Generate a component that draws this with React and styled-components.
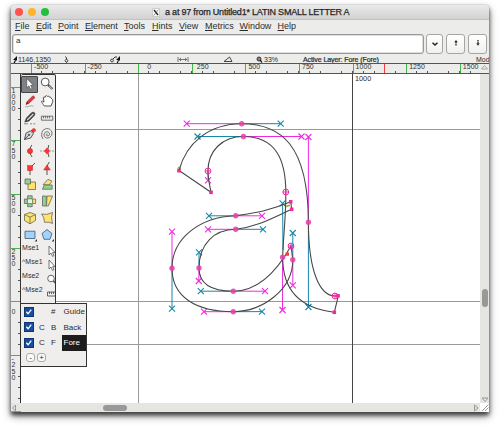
import React from "react";
import styled, { createGlobalStyle, css } from "styled-components";

const Global = createGlobalStyle`
  * { box-sizing: border-box; }
  body { margin: 0; background: #fff; overflow: hidden; font-family: "Liberation Sans", Arial, sans-serif; color: #2c2c2c; }
`;
const Page = styled.div`width: 500px; height: 428px; padding: 5px 11px 17px 11px; background: #fff;`;
const Window = styled.div`
  height: 407px; display: flex; flex-direction: column; overflow: hidden;
  background: #ececea; border-radius: 3px 3px 0 0;
  box-shadow: 0 0 1px #777, 0 3px 4px rgba(0,0,0,.65), 0 4px 9px rgba(0,0,0,.45);
`;
const TitleBar = styled.div`
  height: 15px; flex: none; display: flex; align-items: center; padding-left: 4px;
  background: linear-gradient(#eaeaea, #d2d2d2); border-bottom: 1px solid #c2c2c2;
`;
const Lights = styled.div`display: flex; gap: 5px; width: 137px;`;
const Light = styled.i`width: 8px; height: 8px; border-radius: 50%; background: ${p => p.$c};`;
const Title = styled.div`
  font-size: 9px; line-height: 14px; margin-left: 5px; white-space: nowrap; color: #262626;
  letter-spacing: -.21px; -webkit-text-stroke: .25px #262626;
`;
const MenuBar = styled.div`height: 14px; flex: none; display: flex; padding-left: 4px;`;
const MenuItem = styled.div`
  width: ${p => p.$w}px; flex: none; font-size: 9px; line-height: 13px; white-space: nowrap; letter-spacing: -.03px;
`;
const U = styled.span`text-decoration: underline; text-underline-offset: 1px; text-decoration-thickness: 1px;`;
const EntryRow = styled.div`height: 20px; flex: none; display: flex; padding: 0 2px 0 1px; gap: 3px;`;
const Entry = styled.div`
  flex: 1; background: #fff; border: 1px solid #999; border-radius: 3px; box-shadow: inset 0 0 0 .5px #bbb;
  font-size: 8px; line-height: 12px; padding-left: 3px; margin-right: -1px;
`;
const EntryButton = styled.div`
  width: ${p => p.$w}px; border: 1px solid #a5a5a3; border-radius: 3px; background: linear-gradient(#fff, #f0f0ee);
  display: flex; align-items: center; justify-content: center;
`;
const Info = styled.div`
  height: 10px; flex: none; display: grid; grid-template-columns: 51px 46px 67px 46px 33px 47px 173px 20px;
  align-items: center; border-bottom: 1px solid #555; font-size: 7px; line-height: 9px; white-space: nowrap; padding-left: 2px;
  overflow: hidden;
`;
const InfoCell = styled.div`
  display: flex; align-items: center; padding-top: 1px; letter-spacing: ${p => p.$ls || 0}px;
  ${p => p.$strong && css`-webkit-text-stroke: .2px #222;`}
`;
const HRuler = styled.div`
  height: 10px; flex: none; display: flex; padding-left: 20px; position: relative; overflow: hidden;
  border-bottom: 1px solid #555;
`;
const HCell = styled.div`
  width: 53.6px; flex: none; height: 9px; border-left: 1px solid #46b54a; padding-left: 2px;
  font-size: 7px; line-height: 6.5px; color: #333; letter-spacing: .05px;
  background: repeating-linear-gradient(90deg, transparent 0 9.2px, #555 9.2px 10px, transparent 10px 10.72px) 0 7px / 100% 2px no-repeat;
`;
const HMark = styled.i`position: absolute; left: 373px; top: 0; width: 1px; height: 9px; background: #f04040;`;
const RulerArrow = styled.svg`position: absolute; right: 0; top: 0; background: #ececea;`;
const Body = styled.div`flex: 1; display: flex; min-height: 0;`;
const VRuler = styled.div`
  width: 10px; flex: none; padding-top: 12.6px; border-right: 1px solid #333; overflow: hidden;
`;
const VCell = styled.div`
  height: 53.7px; border-top: 1px solid #46b54a; font-size: 7px; line-height: 6.3px; color: #333;
  display: flex; flex-direction: column;
  background: repeating-linear-gradient(180deg, transparent 0 9.6px, #555 9.6px 10.4px, transparent 10.4px 10.74px) 7px 0 / 2px 100% no-repeat;
`;
const VDigit = styled.span`display: block; height: 6.3px; padding-left: .5px;`;
const Canvas = styled.div`flex: 1; position: relative; background: #fff; overflow: hidden;`;
const Drawing = styled.svg`position: absolute; left: 0; top: 0; display: block;`;
const GuideLabel = styled.span`position: absolute; left: 334px; top: 0; font-size: 7.3px; line-height: 9px;`;
const VScroll = styled.div`width: 9px; flex: none; background: #e5e6e2; display: flex; flex-direction: column; align-items: center;`;
const VThumb = styled.div`width: 6px; height: 18px; border-radius: 3px; background: #989997; margin-top: 215px; margin-bottom: auto;`;
const HScroll = styled.div`height: 9px; flex: none; background: #e5e6e2; display: flex; align-items: center; position: relative;`;
const HThumb = styled.div`width: 24px; height: 6px; border-radius: 3px; background: #999; margin-left: 86px; margin-right: auto;`;
const VMark = styled.i`position: absolute; left: 0; bottom: 0; width: 10px; height: 1px; background: #f07070;`;
const Arrow = styled.svg`display: block; flex: none;`;

const ToolBox = styled.div`
  position: absolute; left: 0; top: 0; width: 35px; height: 230px; background: #efeeec;
  border: 1px solid #333; border-left: 0; border-radius: 2px 2px 0 0; padding-top: 1px;
`;
const ToolGrid = styled.div`display: grid; grid-template-columns: 17px 17px; grid-auto-rows: 16.7px;`;
const Tool = styled.div`
  display: flex; align-items: center; justify-content: center;
  ${p => p.$active && css`background: #7d8286; border: 1px solid #454545; border-radius: 1px;`}
`;
const MouseRow = styled.div`
  height: 14px; display: flex; justify-content: space-between; overflow: hidden;
  font-size: 7px; line-height: 10px; padding-left: 1px; letter-spacing: .05px;
  svg { margin-top: 2px; }
`;
const Layers = styled.div`
  position: absolute; left: 0; top: 229px; width: 66px; height: 64px; background: #efeeec;
  border: 1px solid #333; border-left: 0; padding: 0 0 0 3px;
`;
const LayerRow = styled.div`display: grid; grid-template-columns: 13px 12px 13px 24px; height: 15.5px; align-items: center; font-size: 8px;`;
const Check = styled.div`width: 10px; height: 10px; background: #174f9c; border: 1px solid #0b3676; display: flex;`;
const LayerFlag = styled.span`padding-left: 2px;`;
const LayerName = styled.div`
  height: 15.5px; line-height: 15px; padding-left: 1.5px;
  ${p => p.$active && css`background: #1d1d1d; color: #fff;`}
`;
const LayerButtons = styled.div`display: flex; gap: 2px; padding: 2px 0 0 2px;`;
const LayerButton = styled.div`
  width: 9px; height: 9px; border: 1px solid #aaa; border-radius: 3px; background: #fafafa;
  display: flex; align-items: center; justify-content: center; font-size: 8px; line-height: 7px;
`;

const M = "#ee2be2", T = "#1688a8", K = "#444", Y = "#ffe36e", G = "#86d890";

const handles = [
  [241.7, 123.7, 186.7, 123.7, M], [241.7, 123.7, 280.7, 123.7, T],
  [243.5, 136.5, 197.5, 136.5, T], [243.5, 136.5, 301.5, 136.5, M],
  [308.4, 222.3, 308.4, 137, M], [308.4, 222.3, 308.4, 307, T],
  [208, 171, 208, 180.3, M], [283, 250, 282.6, 203.3, T],
  [235.7, 215.8, 209, 215.8, T], [235.7, 215.8, 262, 215.8, M],
  [235.7, 229.3, 208, 229.3, M], [235.7, 229.3, 263, 229.3, T],
  [172, 268.3, 172, 231.7, M], [172, 268.3, 172, 308.7, T],
  [199, 268, 199, 252.3, T], [199, 268, 198.8, 281, M],
  [233.3, 291.2, 200.8, 291.2, T], [233.3, 291.2, 265, 291.2, M],
  [233.3, 311.7, 204, 311.7, M], [233.3, 311.7, 262, 311.6, T],
  [292.8, 259.7, 292.8, 233, T], [292.8, 259.7, 292.8, 285.3, M],
  [282.6, 257.3, 282.5, 310, M],
];
const dots = [[241.7, 123.7], [243.5, 136.5], [308.4, 222.3], [235.7, 215.8], [235.7, 229.3], [172, 268.3], [199, 268], [233.3, 291.2], [233.3, 311.7], [292.8, 259.7], [282.6, 257.3]];
const rings = [[208, 171], [285.8, 192], [291, 246], [335, 296]];
const squares = [[179, 170.7], [211, 192.3], [290.7, 201.8], [291.7, 209.3], [338, 295.8], [334.3, 312.3]];

const Glyph = () => (
  <Drawing width="459" height="330" viewBox="21 74 459 330" fill="none">
    <g stroke="#999"><path d="M21 129.5H480M21 301.5H480M21 344.5H480M138.5 74V404" /></g>
    <path d="M352.5 74V404" stroke="#444" />
    {handles.map(([a, b, c, d, s], i) => (
      <g key={i} stroke={s}>
        <path d={`M${a} ${b}L${c} ${d}`} />
        <path d={`M${c - 3} ${d - 3}l6 6m0-6l-6 6`} strokeWidth="1.1" />
      </g>
    ))}
    <path stroke="#484848" strokeWidth="1.1" d="M179 170.5C186 144 208 123.7 241.7 123.7C281 123.7 308.3 145 308.4 222.3C308.5 272 320 296 335 296L338.3 295.8L334.3 312.3C306 309 282.5 295 282.7 257.3C283 237 286 220 285.8 192C285.7 160 276 136.5 243.5 136.5C222 136.5 208 151 208 171C208 180 210 186 211 192.3Z" />
    <path stroke="#484848" strokeWidth="1.1" d="M290.7 201.8C269 211 254 213 235.7 215.8C200 217 172 238 172 268.3C172 297 196 311.7 233.3 311.7C262 311.5 293 290 292.8 259.7L291 246C272 280 252 291.2 233.3 291.2C210 291.2 199 283 199 268C199 244 214 229.6 235.7 229.3C257 227 272 218 291.7 209.3Z" />
    {dots.map(([x, y], i) => <circle key={i} cx={x} cy={y} r="2.7" fill="#e83fae" fillOpacity=".88" />)}
    {rings.map(([x, y], i) => (
      <g key={i} stroke="#ee2aa4"><circle cx={x} cy={y} r="2.9" /><path d={`M${x - 3} ${y}h6M${x} ${y - 3}v6`} strokeWidth=".9" /></g>
    ))}
    {squares.map(([x, y], i) => <rect key={i} x={x - 1.8} y={y - 1.8} width="3.6" height="3.6" fill="#ee2aa4" />)}
    <circle cx="179.3" cy="168.3" r="1.2" stroke="#6d6d20" strokeWidth=".8" />
    <path d="M286 206.5l4-1.2" stroke="#a5a516" strokeWidth="1.5" />
    <rect x="285.6" y="252.4" width="3.4" height="3.4" fill="#ef4444" />
  </Drawing>
);

const redDot = <circle cx="8" cy="8" r="2.6" fill="#f33" stroke="#a22" strokeWidth=".5" />;
const tools = [
  <path d="M5 2v10l2.4-2 1.6 3.6 1.9-.9-1.7-3.4h3z" fill="#fff" stroke={K} strokeWidth=".7" />,
  <g stroke={K}><circle cx="6.2" cy="6" r="3.9" fill="#fff" strokeWidth=".9" /><path d="M9.2 9l4.2 4" strokeWidth="2.2" /><path d="M10 9.8l3.1 3" stroke="#ddd" /></g>,
  <g><path d="M4 11.5l1.2-3L11 2.7l2 1.8-6 5.7z" fill="#ef3340" stroke="#822" strokeWidth=".6" /><path d="M4 11.5l1-2.8 1.5 1.5z" fill="#333" /><path d="M3 13.5q2 1 4-.2t4.5 0" stroke="#999" strokeWidth=".8" /></g>,
  <path d="M5.3 13C4 11 2.7 9.5 2.5 8.5q1-1.2 2.5.7L4.3 4.5q.8-1.3 1.7 0L6.5 3q1.2-1 1.8.4 1.6-1 2 .7 1.5-.5 1.8 1L13 6q1 .4.8 2.3L12 13z" fill="#fff" stroke={K} strokeWidth=".9" />,
  <g><path d="M2.8 12L4.5 8 9.5 2.8q1.8-1.3 3 0 1 1.2-.2 2.6L7 11z" fill="#444" stroke="#333" strokeWidth=".7" /><path d="M5.3 10l6-6" stroke="#ddd" strokeWidth="1.2" /><path d="M2 13.8h4m2 0h2m1.3 0h2" stroke="#888" /></g>,
  <g stroke="#555" strokeWidth=".8"><path d="M2.4 6.2h11.4v4H2.4z" fill="#e8e8e8" /><path d="M4.5 6.2v2m2-2v2m2-2v2m2-2v2" /></g>,
  <g stroke={K} strokeWidth=".9"><path d="M2.5 13.5L4 7.2l4.3-2.4 3 3-2.6 4.2z" fill="#ddd" /><path d="M2.5 13.5l4-4.2" /><circle cx="7" cy="8.8" r=".8" /><path d="M9 4l3 3" /><circle cx="11.8" cy="4.2" r="1.8" fill="#f33" stroke="#c22" strokeWidth=".4" /></g>,
  <path d="M8.6 8.2q-.8-1-1.3.1-.2 1.7 1.7 1.7 2.2-.5 1.5-2.8Q9 4.8 6.5 6 4 8 5.4 10.6q2 2.4 5 1.1 3.3-2 2.6-5.4Q11.5 2.3 7.6 2.5 3.8 3 2.8 6.5 2 10 4 13" stroke="#777" strokeWidth="1" />,
  <g><path d="M9.8 2Q5.5 8 10 14" stroke="#555" />{redDot}</g>,
  <g><path d="M9.8 2Q7 8 10 14" stroke="#555" /><path d="M1 8h14" stroke="#999" strokeDasharray="2 1" /><path d="M8 4.6l3 3.4-3 3.4L5 8z" fill="#f33" /></g>,
  <g><path d="M8 15V8l5-5" stroke="#555" /><rect x="5.7" y="5.7" width="4.8" height="4.8" fill="#f33" stroke="#a22" strokeWidth=".5" /></g>,
  <g><path d="M8 15V8Q8 5 10.2 2" stroke="#555" /><path d="M8 5l3.4 5H4.6z" fill="#f33" stroke="#a22" strokeWidth=".4" /></g>,
  <g stroke="#665" strokeWidth=".8"><path d="M6 6h7.5v7.5H6z" fill={Y} /><path d="M3 3h5.5v5H3z" fill={G} /></g>,
  <g stroke="#665" strokeWidth=".8"><path d="M4 8.7l5-5.4 4 1.9-3 3.8z" fill={Y} /><path d="M3.4 13.2l2-4.2h7.7v4.2z" fill={G} /></g>,
  <g stroke="#665" strokeWidth=".8"><path d="M5.6 2.8h4.6v3H5.6z" fill={G} /><path d="M2.4 6h3v4.5h-3z" fill={G} /><path d="M10.6 6h3v4.5h-3z" fill={Y} /><path d="M5.6 10.7h4.6v3H5.6z" fill={G} /></g>,
  <g stroke="#665" strokeWidth=".8"><path d="M3.5 3h3.8v10H3.5z" fill={G} /><path d="M8 3h5.5L9.3 13H7.5z" fill={Y} /></g>,
  <g stroke="#665" strokeWidth=".8"><path d="M8 2.5l5.5 2v6L8 13.8l-5.5-3.3v-6z" fill={Y} /><path d="M2.5 4.5L8 7.2l5.5-2.7M8 7.2v6.6" /></g>,
  <path d="M2.5 4q5 1.5 11-1.5-2 5 0 11-3-2-8-1.2Q5.5 7 2.5 4z" fill={Y} stroke="#665" strokeWidth=".8" />,
  <g><path d="M3 4.2h10v7.3H3z" fill="#9ed2ff" stroke="#456" strokeWidth=".8" /><path d="M15 12v2.4h-2.4z" fill="#333" /></g>,
  <g><path d="M8 2.5l5 4-2 5.8H5L3 6.5z" fill="#9ed2ff" stroke="#456" strokeWidth=".8" /><path d="M15 12v2.4h-2.4z" fill="#333" /></g>,
];
const pointer = <path d="M3 1v9l2-2 1.5 3.4L8 10.6 6.6 7.6H9z" fill="#fff" stroke="#555" strokeWidth=".8" />;
const mice = [
  ["Mse1", pointer],
  ["^Mse1", pointer],
  ["Mse2", <g stroke="#555" strokeWidth=".9"><circle cx="5" cy="5.5" r="3.3" fill="#fff" /><path d="M7.5 8l3 3" strokeWidth="1.6" /></g>],
  ["^Mse2", <path d="M1.5 5h9v4h-9zM3.5 5v2m2-2v2m2-2v2" stroke="#555" strokeWidth=".9" fill="#eee" />],
];

const menus = [["F", "ile", 21], ["E", "dit", 22], ["P", "oint", 27], ["El", "ement", 39], ["T", "ools", 28], ["H", "ints", 27], ["V", "iew", 26], ["M", "etrics", 34.5], ["W", "indow", 38], ["H", "elp", 30]];

export default function App() {
  return (
    <>
      <Global />
      <Page>
        <Window>
          <TitleBar>
            <Lights><Light $c="#fa5550" /><Light $c="#fbb62e" /><Light $c="#23c03d" /></Lights>
            <svg width="8" height="9" viewBox="0 0 8 9"><path d="M.5.5h7v8h-7z" fill="#f8f8f8" stroke="#bbb" strokeWidth=".6" /><path d="M2 2l4 5" stroke="#222" strokeWidth="1.3" /><path d="M6.3 1.7L1.7 7.5" stroke="#555" strokeWidth=".6" /></svg>
            <Title>a at 97 from Untitled1* LATIN SMALL LETTER A</Title>
          </TitleBar>
          <MenuBar>
            {menus.map(([a, b, w], i) => <MenuItem key={i} $w={w}><U>{a}</U>{b}</MenuItem>)}
          </MenuBar>
          <EntryRow>
            <Entry>a</Entry>
            <EntryButton $w={17}><svg width="8" height="8" viewBox="0 0 8 8"><path d="M1.5 2.7L4 5l2.5-2.3" stroke="#222" strokeWidth="1.5" fill="none" /></svg></EntryButton>
            <EntryButton $w={19}><svg width="6" height="8" viewBox="0 0 6 8"><path d="M3 0L4.8 2.3H1.2zM2.3 2h1.4v1.4H2.3zM2.3 4h1.4v1.6H2.3z" fill="#333" /></svg></EntryButton>
            <EntryButton $w={19}><svg width="6" height="8" viewBox="0 0 6 8"><path d="M2.3 0h1.4v1.4H2.3zM2.3 2h1.4v1.6H2.3zM3 5.8L4.8 3.5H1.2z" fill="#333" /></svg></EntryButton>
          </EntryRow>
          <Info>
            <InfoCell $ls={0.05}><svg width="5" height="7" viewBox="0 0 5 7"><path d="M4 0v5L3 4 2 7H.5L2 4H0z" fill="#111" /></svg>1146,1350</InfoCell>
            <InfoCell><svg width="5" height="7" viewBox="0 0 5 7"><path d="M1.5.5L2.5 2v1M2.5 3l1.4 1.6-1.4 2-1.4-2z" stroke="#333" fill="none" /></svg></InfoCell>
            <InfoCell><svg width="11" height="7" viewBox="0 0 11 7"><circle cx="2" cy="4.5" r="1.4" stroke="#333" strokeWidth=".9" fill="none" /><path d="M3 3L5 1h2" stroke="#333" fill="none" /><path d="M10 0v5L9 4 8 7H6.7L8 4H6z" fill="#111" /></svg></InfoCell>
            <InfoCell><svg width="12" height="7" viewBox="0 0 12 7"><path d="M1 1v5M11 1v5M2 3.5h8M4 2L2.4 3.5 4 5M8 2l1.6 1.5L8 5" stroke="#555" strokeWidth=".8" fill="none" /></svg></InfoCell>
            <InfoCell><svg width="11" height="7" viewBox="0 0 11 7"><path d="M1 5.5L6.5 1 9 5.5z" stroke="#333" strokeWidth=".9" fill="none" /></svg></InfoCell>
            <InfoCell><svg width="8" height="7" viewBox="0 0 8 7"><circle cx="3" cy="3" r="2" stroke="#333" fill="#888" /><path d="M4 4l2 2.5" stroke="#222" strokeWidth="1.3" /></svg>33%</InfoCell>
            <InfoCell $strong $ls={-0.08}>Active Layer: Fore (Fore)</InfoCell>
            <InfoCell>Mod</InfoCell>
          </Info>
          <HRuler>
            {[-500, -250, "\u00a0\u00a0\u00a00", "\u00a0250", 500, 750, 1000, 1250, 1500].map((n, i) => <HCell key={i}>{n}</HCell>)}
            <HMark />
            <RulerArrow width="9" height="9" viewBox="0 0 9 9"><path d="M1.5 5h6L4.5 1.5z" fill="none" stroke="#aaa" /></RulerArrow>
          </HRuler>
          <Body>
            <VRuler>
              {["1000", "750", "500", "250", " 0", "-250"].map((s, i) => <VCell key={i}>{[...s].map((c, j) => <VDigit key={j}>{c}</VDigit>)}</VCell>)}
            </VRuler>
            <Canvas>
              <Glyph />
              <GuideLabel>1000</GuideLabel>
              <ToolBox>
                <ToolGrid>
                  {tools.map((t, i) => <Tool key={i} $active={i === 0}><svg width="16" height="16" viewBox="0 0 16 16" fill="none">{t}</svg></Tool>)}
                </ToolGrid>
                {mice.map(([n, icon], i) => <MouseRow key={i}>{n}<svg width="8" height="12" viewBox="1 0 8 12" fill="none">{icon}</svg></MouseRow>)}
              </ToolBox>
              <Layers>
                {[["", "#", "Guide"], ["C", "B", "Back"], ["C", "F", "Fore"]].map(([a, b, c]) => (
                  <LayerRow key={c}>
                    <Check><svg width="8" height="8" viewBox="0 0 9 9"><path d="M1.5 4.2l2 2.3L7 1.8" stroke="#fff" strokeWidth="1.5" fill="none" /></svg></Check>
                    <LayerFlag>{a}</LayerFlag><LayerFlag>{b}</LayerFlag>
                    <LayerName $active={c === "Fore"}>{c}</LayerName>
                  </LayerRow>
                ))}
                <LayerButtons><LayerButton>-</LayerButton><LayerButton>+</LayerButton></LayerButtons>
              </Layers>
            </Canvas>
            <VScroll>
              <VThumb />
              <Arrow width="8" height="6" viewBox="0 0 8 6"><path d="M1 1h6L4 4.5z" fill="none" stroke="#999" /></Arrow>
            </VScroll>
          </Body>
          <HScroll>
            <Arrow width="6" height="8" viewBox="0 0 6 8"><path d="M4.5 1v6L1.5 4z" fill="none" stroke="#999" /></Arrow>
            <HThumb />
            <Arrow width="7" height="8" viewBox="0 0 7 8"><path d="M1.5 1v6l3.5-3z" fill="none" stroke="#999" /></Arrow>
            <Arrow width="9" height="9" viewBox="0 0 9 9"><path d="M0 0h9v9H0z" fill="#fff" /><path d="M2 8L8.5 1.5M5 8l3.5-3.5" stroke="#999" /></Arrow>
            <VMark />
          </HScroll>
        </Window>
      </Page>
    </>
  );
}
